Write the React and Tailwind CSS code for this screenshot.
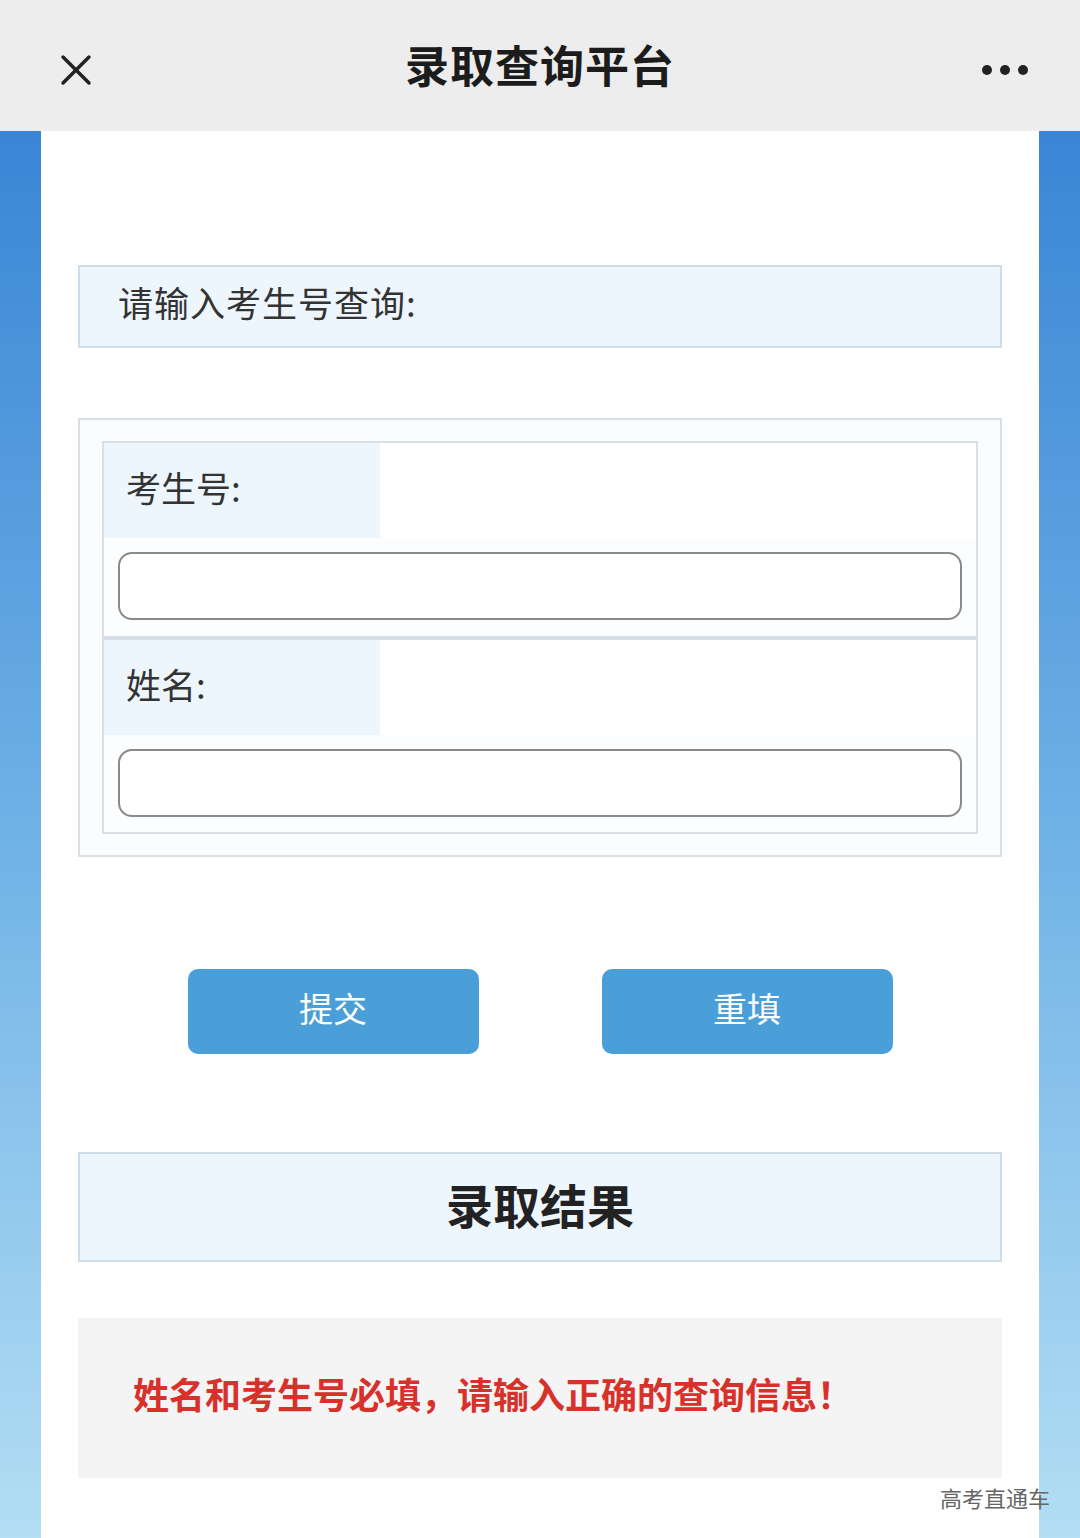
import { X } from "lucide-react";

const font = { fontFamily: '"Noto Sans CJK SC", "Noto Sans", sans-serif' };

function FieldRow({ label, last }) {
  return (
    <div className={last ? "" : "border-b-[4px] border-[#d6dfe7]"}>
      <div className="flex h-[95px]">
        <div className="flex w-[276px] items-center bg-[#eef6fd] pb-[6px] pl-[22px] text-[35px] text-[#333]">
          {label}
        </div>
        <div className="flex-1 bg-white" />
      </div>
      <div className={`bg-[#fbfdff] px-[14px] pt-[14px] ${last ? "pb-[15px]" : "pb-[16px]"}`}>
        <div className="h-[68px] rounded-[14px] border-2 border-[#8a8a8a] bg-white" />
      </div>
    </div>
  );
}

export default function App() {
  return (
    <div className="flex h-[1538px] w-[1080px] flex-col" style={font}>
      {/* top bar */}
      <div className="relative flex h-[131px] items-center justify-center bg-[#ededed]">
        <X className="absolute left-[50px] top-[44px] h-[52px] w-[52px] text-[#222]" strokeWidth={1.6} />
        <div className="pb-[4px] text-[44px] font-bold tracking-[1px] text-[#1c1c1c]">录取查询平台</div>
        <div className="absolute right-[52px] top-[65px] flex gap-[8px]">
          <span className="h-[10px] w-[10px] rounded-full bg-[#222]" />
          <span className="h-[10px] w-[10px] rounded-full bg-[#222]" />
          <span className="h-[10px] w-[10px] rounded-full bg-[#222]" />
        </div>
      </div>

      {/* body */}
      <div className="flex flex-1 bg-gradient-to-b from-[#3a85d5] via-[#6fb2e6] to-[#b3def4] px-[41px]">
        <div className="relative flex flex-1 flex-col bg-white px-[37px] pt-[134px]">
          <div className="flex h-[83px] items-center border-2 border-[#cfdde8] bg-[#eef6fd] pb-[8px] pl-[38px] text-[35px] tracking-[1px] text-[#333]">
            请输入考生号查询:
          </div>

          <div className="mt-[70px] border-2 border-[#d9dfe4] bg-[#fafcfe] px-[22px] pb-[21px] pt-[21px]">
            <div className="border-2 border-[#d9dfe4]">
              <FieldRow label="考生号:" />
              <FieldRow label="姓名:" last />
            </div>
          </div>

          <div className="mt-[112px] flex justify-center gap-[123px]">
            <div className="flex h-[85px] w-[291px] items-center justify-center rounded-[10px] bg-[#4a9fd8] pb-[8px] text-[34px] text-white">
              提交
            </div>
            <div className="flex h-[85px] w-[291px] items-center justify-center rounded-[10px] bg-[#4a9fd8] pb-[8px] text-[34px] text-white">
              重填
            </div>
          </div>

          <div className="mt-[98px] flex h-[110px] items-center justify-center border-2 border-[#cfdde8] bg-[#eef6fd] pb-[6px] text-[47px] font-bold text-[#222]">
            录取结果
          </div>

          <div className="mt-[56px] flex h-[160px] items-center bg-[#f4f4f4] pb-[10px] pl-[55px] text-[36px] font-bold text-[#d8312b]">
            姓名和考生号必填，请输入正确的查询信息！
          </div>

          <div className="absolute bottom-[24px] right-[-11px] text-[22px] text-[#666]">高考直通车</div>
        </div>
      </div>
    </div>
  );
}
